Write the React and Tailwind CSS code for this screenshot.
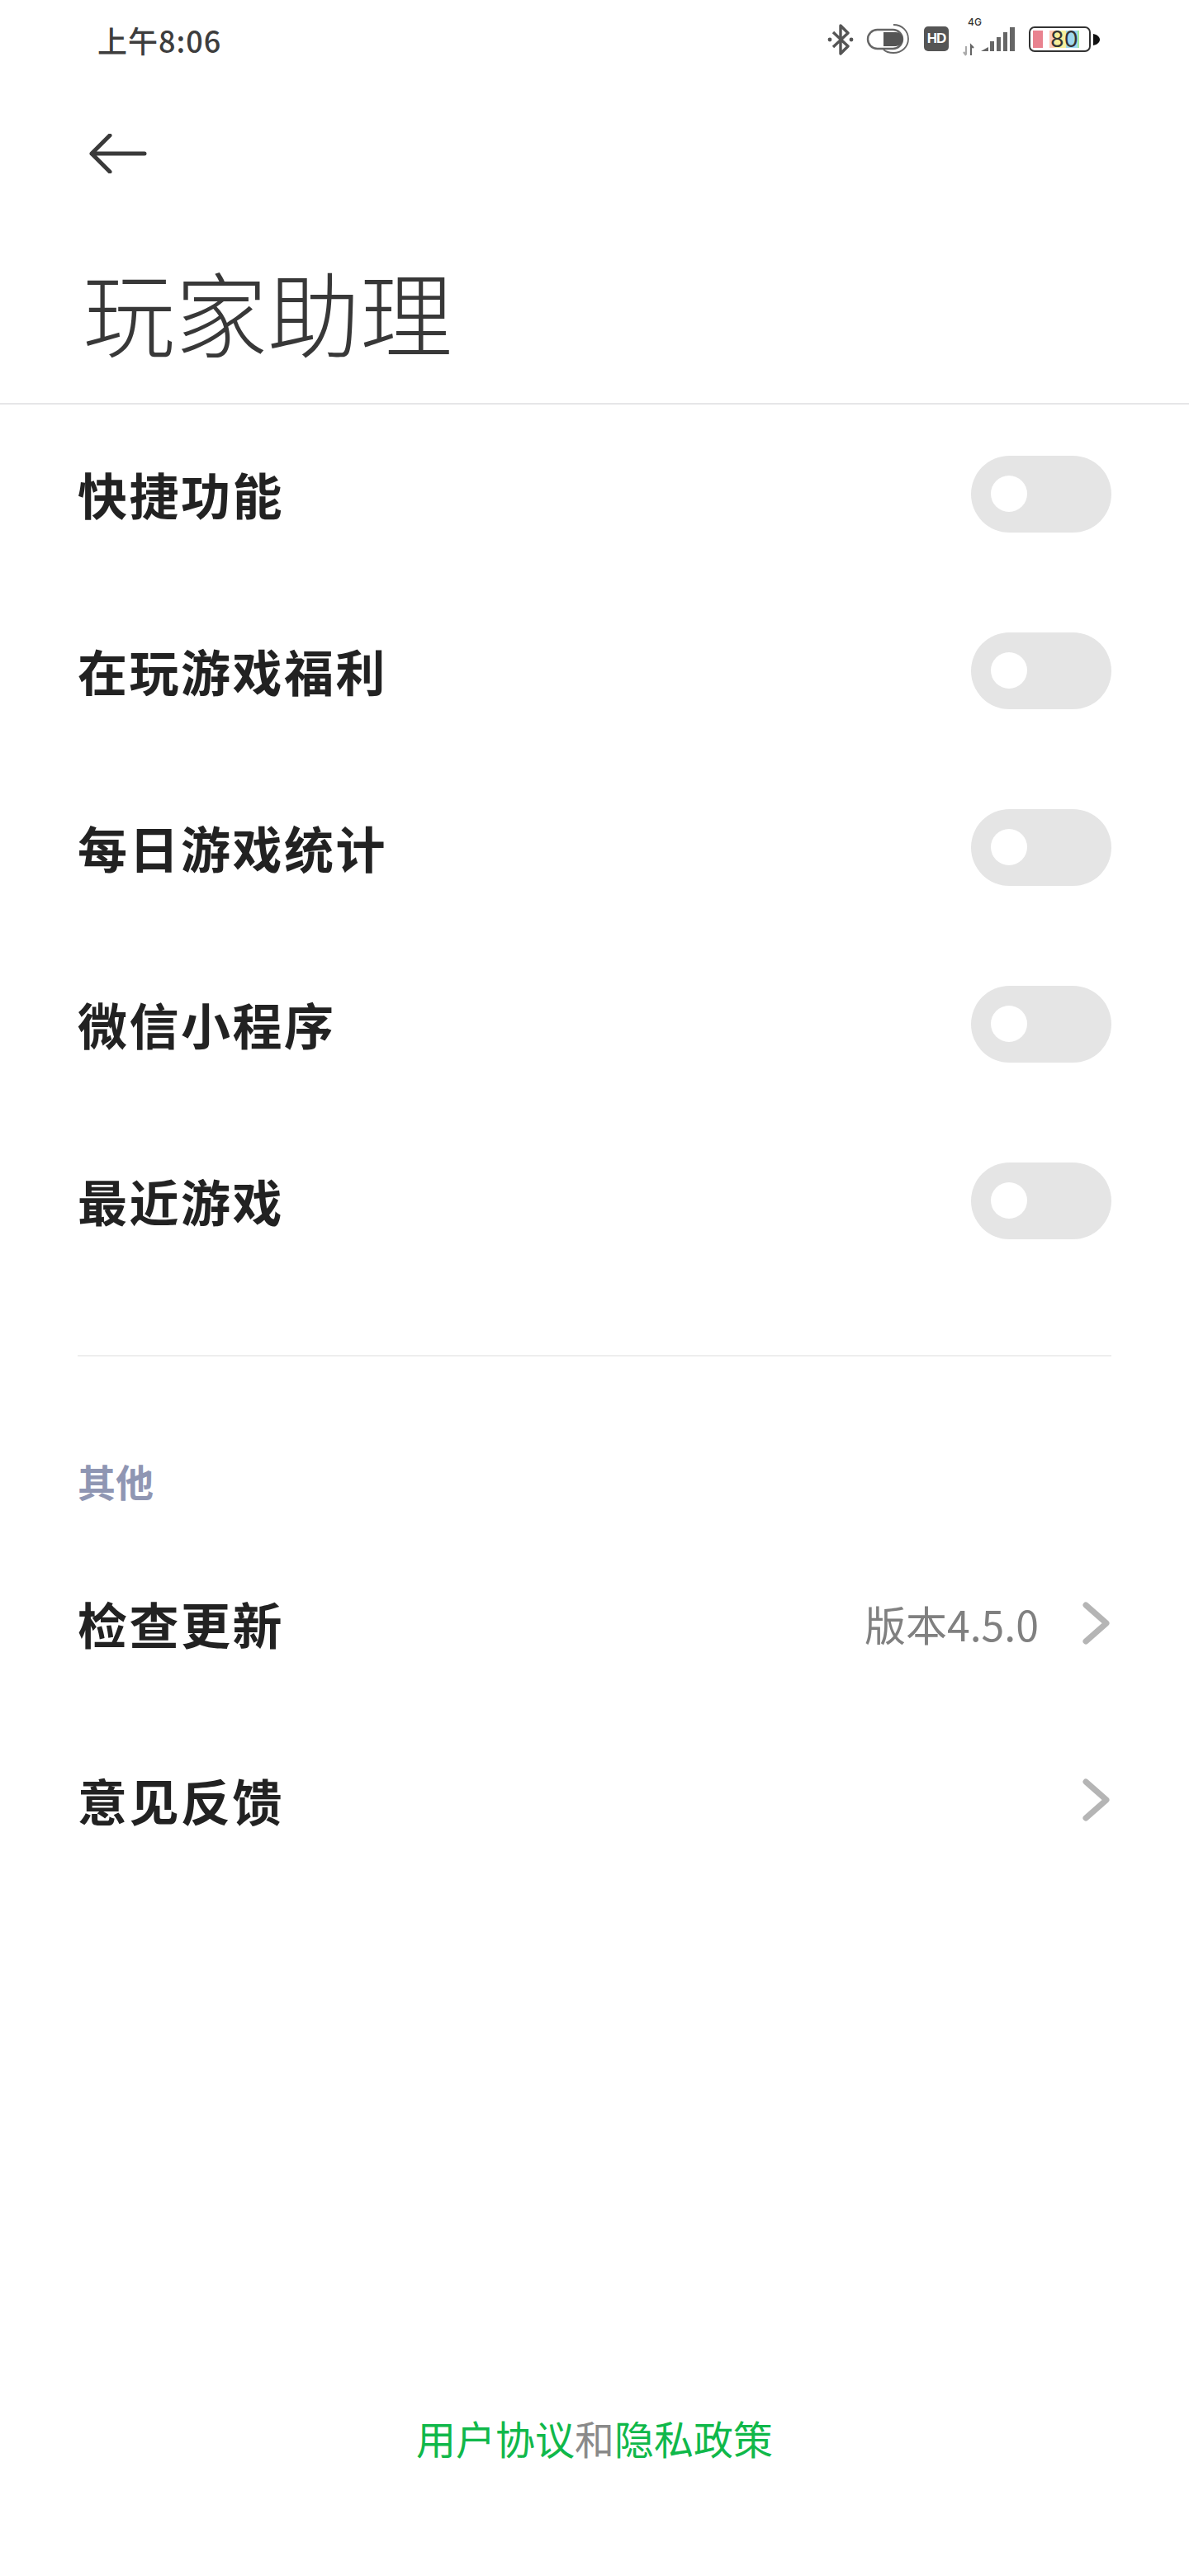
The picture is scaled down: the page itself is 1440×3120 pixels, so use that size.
const cjk = { fontFamily: '"Noto Sans CJK SC", "Noto Sans", sans-serif' };

const toggles = ["快捷功能", "在玩游戏福利", "每日游戏统计", "微信小程序", "最近游戏"];

function Toggle() {
  return (
    <div className="w-[170px] h-[93px] rounded-full bg-[#e5e5e5] flex items-center pl-[24px]">
      <div className="w-[44px] h-[44px] rounded-full bg-white" />
    </div>
  );
}

function Chevron() {
  return (
    <svg width="36" height="52" viewBox="0 0 36 52" fill="none">
      <path d="M5 4 L30 26 L5 48" stroke="#b5b5b5" strokeWidth="7" strokeLinejoin="round" strokeLinecap="round" />
    </svg>
  );
}

function StatusIcons() {
  return (
    <div className="flex items-start h-[70px] pt-[20px]">
      {/* bluetooth */}
      <svg width="32" height="38" viewBox="0 0 32 38" fill="none" className="mt-[9px]">
        <path d="M7 10 L25 27 L16 36 V2 L25 11 L7 28" stroke="#555" strokeWidth="3.4" strokeLinejoin="round" />
        <circle cx="3" cy="19" r="2.4" fill="#555" />
        <circle cx="29" cy="19" r="2.4" fill="#555" />
      </svg>
      {/* eye care */}
      <svg width="54" height="38" viewBox="0 0 54 38" fill="none" className="ml-[15px] mt-[9px]">
        <rect x="2" y="7" width="42" height="23" rx="11.5" stroke="#666" strokeWidth="2.4" />
        <path d="M21 10 H36 A8.5 8.5 0 0 1 36 27 H21 Z" fill="#555" />
        <path d="M33 1 C44 1 51 9 51 18 C51 28 43 35 33 35 C28 35 24 34 21 31" stroke="#666" strokeWidth="1.8" />
      </svg>
      {/* HD */}
      <div className="ml-[16px] mt-[12px] w-[30px] h-[30px] rounded-[5px] bg-[#555] text-white flex items-center justify-center text-[17px] font-bold tracking-[-1px]" style={{ fontFamily: '"Liberation Sans", sans-serif' }}>
        HD
      </div>
      {/* signal */}
      <div className="relative ml-[15px] w-[70px] h-[50px]">
        <span className="absolute left-[8px] top-0 text-[12px] leading-[14px] font-medium text-[#333]" style={{ fontFamily: 'Inter, sans-serif' }}>4G</span>
        <svg width="70" height="50" viewBox="0 0 70 50" className="absolute left-0 top-0" fill="none">
          <path d="M6 36 V46 M3 43 L6 47" stroke="#aaa" strokeWidth="2.2" />
          <path d="M12 47 V35 L15 38" stroke="#666" strokeWidth="2.2" />
          <path d="M24 42 L33 37 V42 Z" fill="#666" />
          <rect x="35" y="30" width="5" height="12" fill="#666" />
          <rect x="43" y="25" width="5" height="17" fill="#666" />
          <rect x="51" y="19" width="5" height="23" fill="#666" />
          <rect x="59" y="13" width="6" height="29" fill="#666" />
        </svg>
      </div>
      {/* battery */}
      <div className="ml-[12px] mt-[12px] flex items-center">
        <div className="relative w-[75px] h-[31px] rounded-[7px] border-2 border-[#333] overflow-hidden">
          <div className="absolute inset-y-[3px] left-[3px] flex">
            <div className="w-[12px] bg-[#e9828f]" />
            <div className="w-[8px] bg-white" />
            <div className="w-[6px] bg-[#fcc9b8]" />
            <div className="w-[14px] bg-[#f6ee9a]" />
            <div className="w-[14px] bg-[#9fd8ee]" />
            <div className="w-[2px] bg-[#a5e8a0]" />
          </div>
          <span className="absolute left-[24px] top-[-3px] text-[27px] leading-[34px] text-[#333]" style={{ fontFamily: 'Inter, sans-serif' }}>80</span>
        </div>
        <svg width="8" height="14" viewBox="0 0 8 14" className="ml-[3px]">
          <path d="M0 0 C5 1 8 4 8 7 C8 10 5 13 0 14 Z" fill="#111" />
        </svg>
      </div>
    </div>
  );
}

export default function App() {
  return (
    <div className="w-[1440px] h-[3120px] bg-white flex flex-col" style={cjk}>
      {/* status bar */}
      <div className="h-[96px] flex items-start justify-between pl-[118px] pr-[108px]">
        <span className="text-[36px] leading-[96px] font-medium text-[#3d3d3d] tracking-[1px]">上午8:06</span>
        <StatusIcons />
      </div>

      {/* back */}
      <div className="h-[180px] flex items-start pl-[108px] pt-[66px]">
        <svg width="70" height="48" viewBox="0 0 70 48" fill="none">
          <path d="M25 2 L3 24 L25 46 M3 24 H67" stroke="#3a3a3a" strokeWidth="5" strokeLinecap="round" strokeLinejoin="round" />
        </svg>
      </div>

      {/* title */}
      <div className="h-[214px] border-b-2 border-[#e6e6e8] pl-[100px]">
        <h1 className="text-[112px] leading-[200px] font-light text-[#383838]">玩家助理</h1>
      </div>

      {/* switches */}
      <div className="px-[94px] pt-[1px]">
        {toggles.map((t) => (
          <div key={t} className="h-[214px] flex items-center justify-between">
            <span className="text-[60px] font-bold text-[#222] tracking-[2.5px]">{t}</span>
            <Toggle />
          </div>
        ))}
      </div>

      <div className="mx-[94px] mt-[80px] h-[2px] bg-[#eeeeee]" />

      <div className="mt-[118px] pl-[94px] text-[46px] leading-[64px] font-bold text-[#8f96b3]">其他</div>

      <div className="px-[94px] mt-[34px]">
        <div className="h-[214px] flex items-center justify-between">
          <span className="text-[60px] font-bold text-[#222] tracking-[2.5px]">检查更新</span>
          <div className="flex items-center">
            <span className="text-[50px] text-[#808080] mr-[52px]">版本4.5.0</span>
            <Chevron />
          </div>
        </div>
        <div className="h-[214px] flex items-center justify-between">
          <span className="text-[60px] font-bold text-[#222] tracking-[2.5px]">意见反馈</span>
          <Chevron />
        </div>
      </div>

      {/* footer */}
      <div className="mt-[630px] text-center text-[48px] leading-[70px] text-[#10b84a]">
        用户协议<span className="text-[#8a8a8a]">和</span>隐私政策
      </div>
    </div>
  );
}
